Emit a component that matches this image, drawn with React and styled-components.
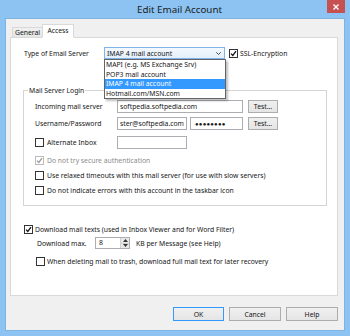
import styled, { createGlobalStyle } from "styled-components";

const GlobalStyle = createGlobalStyle`
  html, body {
    margin: 0;
    padding: 0;
    background: #8cc3f2;
  }
  body {
    font-family: "Noto Sans", "Liberation Sans", Arial, sans-serif;
    font-size: 6.8px;
    color: #151515;
  }
`;

const Window = styled.div`
  width: 350px;
  height: 336px;
  box-sizing: border-box;
  padding: 0 5px 5px;
  background: #8cc3f2;
  display: flex;
  flex-direction: column;
`;

const TitleBar = styled.div`
  height: 18px;
  display: flex;
  align-items: flex-start;
`;

const Title = styled.div`
  flex: 1;
  text-align: center;
  padding-left: 27px;
  font-size: 9.8px;
  line-height: 19px;
  color: #1b1b1b;
`;

const CloseButton = styled.div`
  width: 18px;
  height: 13px;
  background: #c75050;
  display: flex;
  align-items: center;
  justify-content: center;
`;

const Client = styled.div`
  flex: 1;
  background: #f0f0f0;
  padding: 6px 7px 0 5px;
  display: flex;
  flex-direction: column;
  box-shadow: inset 0 0 0 1px #7fb3e0;
`;

const TabStrip = styled.div`
  display: flex;
  align-items: flex-end;
  height: 13px;
  padding-left: 2px;
`;

const Tab = styled.div`
  position: relative;
  z-index: 1;
  box-sizing: border-box;
  height: ${(p) => (p.$active ? 14 : 10)}px;
  width: ${(p) => (p.$active ? 32 : 31)}px;
  margin-left: ${(p) => (p.$active ? -1 : 0)}px;
  margin-bottom: ${(p) => (p.$active ? -1 : 0)}px;
  border: 1px solid #d9d9d9;
  border-bottom: ${(p) => (p.$active ? "1px solid #fff" : "none")};
  background: ${(p) => (p.$active ? "#fff" : "linear-gradient(#f0f0f0, #e5e5e5)")};
  text-align: center;
  line-height: ${(p) => (p.$active ? 12 : 9)}px;
`;

const Panel = styled.div`
  box-sizing: border-box;
  height: 259px;
  border: 1px solid #d9d9d9;
  background: #fff;
  display: flex;
  flex-direction: column;
`;

const ServerRow = styled.div`
  display: flex;
  align-items: center;
  height: 12px;
  margin: 9px 0 0 13px;
`;

const Label = styled.div`
  width: ${(p) => p.$w}px;
  flex-shrink: 0;
  white-space: nowrap;
`;

const Combo = styled.div`
  position: relative;
  box-sizing: border-box;
  width: 121px;
  height: 12px;
  border: 1px solid #7eb4ea;
  background: linear-gradient(#f4f9fe, #e3effb);
  display: flex;
  align-items: center;
  justify-content: space-between;
  padding: 0 3px 0 2px;
  margin-right: 4px;
`;

const DropList = styled.div`
  position: absolute;
  top: 11px;
  left: -1px;
  z-index: 5;
  box-sizing: border-box;
  width: 122px;
  border: 1px solid #646464;
  background: #fff;
  box-shadow: 2px 2px 2px rgba(0, 0, 0, 0.25);
`;

const DropItem = styled.div`
  height: 9.5px;
  line-height: 9.5px;
  padding-left: 1px;
  background: ${(p) => (p.$selected ? "#3399ff" : "#fff")};
  color: ${(p) => (p.$selected ? "#fff" : "#151515")};
  white-space: nowrap;
`;

const CheckRow = styled.div`
  display: flex;
  align-items: center;
  gap: ${(p) => p.$gap ?? 3}px;
  width: ${(p) => (p.$w ? `${p.$w}px` : "auto")};
  height: ${(p) => p.$h ?? 15}px;
  margin-left: ${(p) => p.$indent ?? 0}px;
  margin-top: ${(p) => p.$top ?? 0}px;
  color: ${(p) => (p.$disabled ? "#8a8a8a" : "#151515")};
  white-space: nowrap;
`;

const Box = styled.span`
  box-sizing: border-box;
  width: 9px;
  height: 9px;
  flex-shrink: 0;
  border: 1px solid ${(p) => (p.$disabled ? "#bcbcbc" : "#333")};
  background: #fff;
  display: inline-flex;
  align-items: center;
  justify-content: center;
`;

const Group = styled.div`
  position: relative;
  box-sizing: border-box;
  width: 304px;
  height: 116px;
  margin: 31px 0 0 12px;
  border: 1px solid #d5d5d5;
  padding: 9px 0 0 11px;
`;

const Legend = styled.span`
  position: absolute;
  top: -5px;
  left: 4px;
  padding: 0 1px;
  background: #fff;
  line-height: 9px;
`;

const FieldRow = styled.div`
  display: flex;
  align-items: center;
  height: 13px;
  margin-top: ${(p) => p.$top ?? 0}px;
`;

const Field = styled.div`
  box-sizing: border-box;
  width: ${(p) => p.$w}px;
  height: ${(p) => p.$h ?? 13}px;
  margin-right: ${(p) => p.$gap ?? 0}px;
  border: 1px solid #abadb3;
  background: #fff;
  padding-left: 2px;
  overflow: hidden;
  white-space: nowrap;
  display: flex;
  align-items: center;
`;

const Dots = styled.span`
  font-size: 6px;
  letter-spacing: 0.2px;
  padding-left: 2px;
`;

const Button = styled.div`
  box-sizing: border-box;
  width: ${(p) => p.$w}px;
  height: ${(p) => p.$h ?? 13}px;
  border: 1px solid ${(p) => (p.$default ? "#3399ff" : "#adadad")};
  background: linear-gradient(#f0f0f0, #e5e5e5);
  display: flex;
  align-items: center;
  justify-content: center;
`;

const MaxRow = styled.div`
  display: flex;
  align-items: center;
  height: 12px;
  margin: 1px 0 0 26px;
`;

const Spinner = styled.div`
  box-sizing: border-box;
  width: 35px;
  height: 12px;
  border: 1px solid #abadb3;
  background: #fff;
  display: flex;
  margin-right: 6px;
`;

const SpinText = styled.div`
  flex: 1;
  padding-left: 3px;
  line-height: 10px;
`;

const SpinButtons = styled.div`
  width: 8px;
  display: flex;
  flex-direction: column;
  border-left: 1px solid #d0d0d0;
`;

const SpinPart = styled.div`
  flex: 1;
  background: #e8e8e8;
  display: flex;
  align-items: center;
  justify-content: center;
  & + & {
    border-top: 1px solid #d0d0d0;
  }
`;

const ButtonBar = styled.div`
  display: flex;
  justify-content: flex-end;
  gap: 5px;
  margin-top: 11px;
`;

const Check = ({ on, disabled }) => (
  <Box $disabled={disabled}>
    {on && (
      <svg width="7" height="7" viewBox="0 0 7 7">
        <path
          d="M1 3.6 L2.8 5.4 L6 1.2"
          fill="none"
          stroke={disabled ? "#9a9a9a" : "#111"}
          strokeWidth="1.3"
        />
      </svg>
    )}
  </Box>
);

const Tri = ({ up }) => (
  <svg width="5" height="3" viewBox="0 0 5 3">
    <path d={up ? "M0 3 L2.5 0 L5 3 Z" : "M0 0 L2.5 3 L5 0 Z"} fill="#333" />
  </svg>
);

export default function App() {
  return (
    <>
      <GlobalStyle />
      <Window>
        <TitleBar>
          <Title>Edit Email Account</Title>
          <CloseButton>
            <svg width="6" height="6" viewBox="0 0 6 6">
              <path d="M0.5 0.5 L5.5 5.5 M5.5 0.5 L0.5 5.5" stroke="#fff" strokeWidth="1.4" />
            </svg>
          </CloseButton>
        </TitleBar>
        <Client>
          <TabStrip>
            <Tab>General</Tab>
            <Tab $active>Access</Tab>
          </TabStrip>
          <Panel>
            <ServerRow>
              <Label $w={80}>Type of Email Server</Label>
              <Combo>
                <span>IMAP 4 mail account</span>
                <svg width="5" height="3" viewBox="0 0 5 3">
                  <path d="M0.3 0.3 L2.5 2.5 L4.7 0.3" fill="none" stroke="#333" strokeWidth="0.9" />
                </svg>
                <DropList>
                  <DropItem>MAPI (e.g. MS Exchange Srv)</DropItem>
                  <DropItem>POP3 mail account</DropItem>
                  <DropItem $selected>IMAP 4 mail account</DropItem>
                  <DropItem>Hotmail.com/MSN.com</DropItem>
                </DropList>
              </Combo>
              <CheckRow $h={12} $gap={2}>
                <Check on />
                SSL-Encryption
              </CheckRow>
            </ServerRow>

            <Group>
              <Legend>Mail Server Login</Legend>
              <FieldRow>
                <Label $w={82}>Incoming mail server</Label>
                <Field $w={126} $gap={5}>softpedia.softpedia.com</Field>
                <Button $w={30}>Test...</Button>
              </FieldRow>
              <FieldRow $top={4}>
                <Label $w={82}>Username/Password</Label>
                <Field $w={70} $gap={3}>ster@softpedia.com</Field>
                <Field $w={53} $gap={5}>
                  <Dots>●●●●●●●●</Dots>
                </Field>
                <Button $w={30}>Test...</Button>
              </FieldRow>
              <FieldRow $top={6}>
                <CheckRow $h={13} $w={82}>
                  <Check />
                  Alternate Inbox
                </CheckRow>
                <Field $w={70} />
              </FieldRow>
              <CheckRow $top={4} $disabled>
                <Check on disabled />
                Do not try secure authentication
              </CheckRow>
              <CheckRow>
                <Check />
                Use relaxed timeouts with this mail server (for use with slow servers)
              </CheckRow>
              <CheckRow>
                <Check />
                Do not indicate errors with this account in the taskbar icon
              </CheckRow>
            </Group>

            <CheckRow $h={14} $top={16} $indent={13} $gap={2}>
              <Check on />
              Download mail texts (used in Inbox Viewer and for Word Filter)
            </CheckRow>
            <MaxRow>
              <Label $w={58}>Download max.</Label>
              <Spinner>
                <SpinText>8</SpinText>
                <SpinButtons>
                  <SpinPart>
                    <Tri up />
                  </SpinPart>
                  <SpinPart>
                    <Tri />
                  </SpinPart>
                </SpinButtons>
              </Spinner>
              KB per Message (see Help)
            </MaxRow>
            <CheckRow $h={14} $top={5} $indent={25} $gap={2}>
              <Check />
              When deleting mail to trash, download full mail text for later recovery
            </CheckRow>
          </Panel>
          <ButtonBar>
            <Button $w={51} $h={14} $default>
              OK
            </Button>
            <Button $w={52} $h={14}>
              Cancel
            </Button>
            <Button $w={52} $h={14}>
              Help
            </Button>
          </ButtonBar>
        </Client>
      </Window>
    </>
  );
}
